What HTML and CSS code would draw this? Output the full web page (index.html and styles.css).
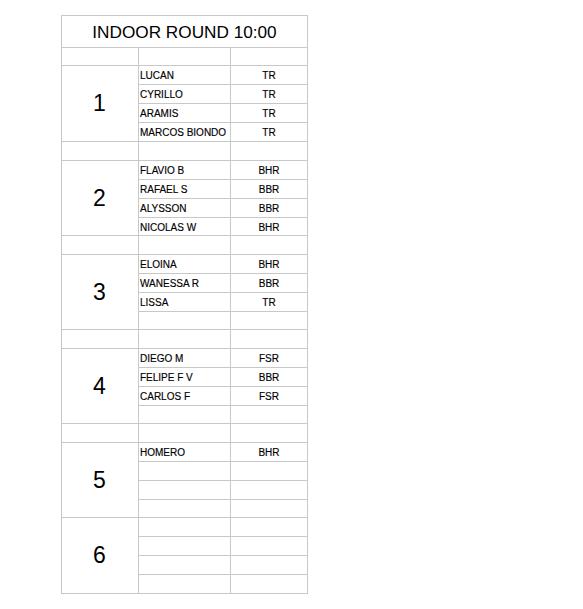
FILE: index.html
```html
<!DOCTYPE html>
<html>
<head>
<meta charset="utf-8">
<link rel="stylesheet" href="styles.css">
</head>
<body>
<div class="sheet">
  <div class="title">INDOOR ROUND 10:00</div>
  <div class="c"></div><div class="c"></div><div class="c"></div>

  <div class="num">1</div>
  <div class="name">LUCAN</div><div class="code">TR</div>
  <div class="name">CYRILLO</div><div class="code">TR</div>
  <div class="name">ARAMIS</div><div class="code">TR</div>
  <div class="name">MARCOS BIONDO</div><div class="code">TR</div>
  <div class="c"></div><div class="c"></div><div class="c"></div>

  <div class="num">2</div>
  <div class="name">FLAVIO B</div><div class="code">BHR</div>
  <div class="name">RAFAEL S</div><div class="code">BBR</div>
  <div class="name">ALYSSON</div><div class="code">BBR</div>
  <div class="name">NICOLAS W</div><div class="code">BHR</div>
  <div class="c"></div><div class="c"></div><div class="c"></div>

  <div class="num">3</div>
  <div class="name">ELOINA</div><div class="code">BHR</div>
  <div class="name">WANESSA R</div><div class="code">BBR</div>
  <div class="name">LISSA</div><div class="code">TR</div>
  <div class="name"></div><div class="code"></div>
  <div class="c"></div><div class="c"></div><div class="c"></div>

  <div class="num">4</div>
  <div class="name">DIEGO M</div><div class="code">FSR</div>
  <div class="name">FELIPE F V</div><div class="code">BBR</div>
  <div class="name">CARLOS F</div><div class="code">FSR</div>
  <div class="name"></div><div class="code"></div>
  <div class="c"></div><div class="c"></div><div class="c"></div>

  <div class="num">5</div>
  <div class="name">HOMERO</div><div class="code">BHR</div>
  <div class="name"></div><div class="code"></div>
  <div class="name"></div><div class="code"></div>
  <div class="name"></div><div class="code"></div>

  <div class="num">6</div>
  <div class="name"></div><div class="code"></div>
  <div class="name"></div><div class="code"></div>
  <div class="name"></div><div class="code"></div>
  <div class="name"></div><div class="code"></div>
</div>
</body>
</html>
```
FILE: styles.css
```css
html, body {
  margin: 0;
  padding: 0;
  background: #ffffff;
}
body {
  padding: 15px 0 0 61px;
  font-family: "Liberation Sans", Arial, sans-serif;
  color: #000000;
}
.sheet {
  display: inline-grid;
  background: #c8c8c8;
  padding: 1px;
  gap: 1px;
  grid-template-columns: 76px 91px 76px;
  grid-template-rows:
    31px 17px
    18px 18px 18px 18px 18px
    18px 18px 18px 17px 18px
    18px 18px 18px 17px 18px
    18px 18px 18px 17px 18px
    18px 18px 18px 17px
    18px 18px 18px 18px;
}
.sheet > div {
  background: #ffffff;
}
.title {
  grid-column: 1 / span 3;
  display: flex;
  align-items: center;
  justify-content: center;
  padding-top: 1px;
  font-size: 17.2px;
}
.num {
  grid-row: span 4;
  display: flex;
  align-items: center;
  justify-content: center;
  padding-right: 1px;
  font-size: 23px;
}
.name {
  display: flex;
  align-items: center;
  padding-left: 1px;
  padding-top: 1px;
  font-size: 10px;
  white-space: nowrap;
  -webkit-text-stroke: 0.15px #000;
}
.code {
  display: flex;
  align-items: center;
  justify-content: center;
  padding-top: 1px;
  font-size: 10px;
  -webkit-text-stroke: 0.15px #000;
}
```
